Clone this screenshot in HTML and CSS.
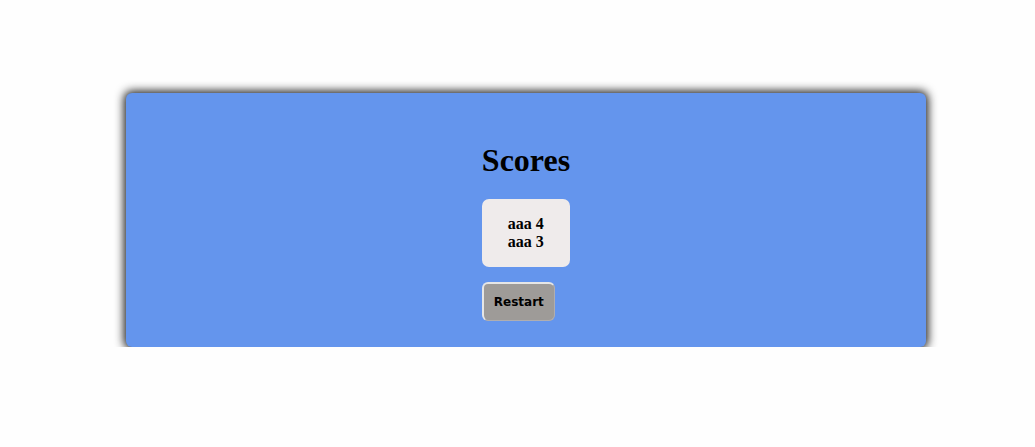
FILE: index.html
```html
<!DOCTYPE html>
<html>
<head>
<meta charset="utf-8">
<link rel="stylesheet" href="styles.css">
</head>
<body>
<div class="card">
  <div class="inner">
    <h1 class="title">Scores</h1>
    <div class="scores">
      <div class="score">aaa 4</div>
      <div class="score">aaa 3</div>
    </div>
    <button class="restart">Restart</button>
  </div>
</div>
</body>
</html>
```
FILE: styles.css
```css
html, body {
  background: #fefefe;
}
body {
  margin: 0;
  padding: 93px 0 0 126px;
  font-family: "Liberation Serif", serif;
}
.card {
  width: 800px;
  height: 254px;
  box-sizing: border-box;
  background: #6495ed;
  border-radius: 6px;
  box-shadow: 0 0 10px 2px rgba(0, 0, 0, 0.9);
  padding-top: 26px;
  display: flex;
  justify-content: center;
}
.inner {
  display: flex;
  flex-direction: column;
  align-items: flex-start;
}
.title {
  font-size: 32px;
  font-weight: bold;
  margin: 23px 0 20px;
  line-height: 37px;
}
.scores {
  background: #efebeb;
  border-radius: 7px;
  width: 88px;
  box-sizing: border-box;
  padding: 16px 0;
  text-align: center;
  font-size: 16px;
  font-weight: bold;
  line-height: 18px;
  color: #000;
}
.restart {
  margin-top: 15px;
  width: 73px;
  height: 39px;
  background: #9e9b98;
  border-style: solid;
  border-width: 2px 1px 1px 2px;
  border-color: #e6e6e6 #b0aeb0 #b0aeb0 #e6e6e6;
  border-radius: 6px;
  font-family: "DejaVu Sans", Verdana, sans-serif;
  font-weight: bold;
  font-size: 12px;
  color: #000;
  padding: 0;
}
```
